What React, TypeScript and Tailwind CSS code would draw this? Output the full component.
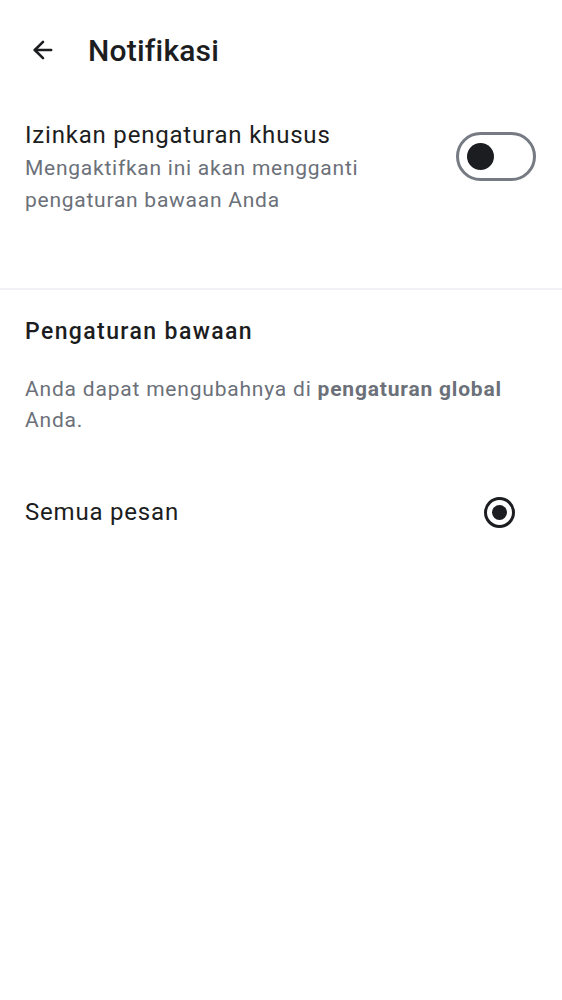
import { ArrowLeft } from 'lucide-react';

export default function App() {
  return (
    <div className="min-h-[1000px] bg-white text-[#1c1d21]" style={{ fontFamily: 'Roboto, "Noto Sans", sans-serif' }}>
      {/* header */}
      <div className="flex h-[100px] items-center px-[29px]">
        <ArrowLeft className="h-[28px] w-[28px]" strokeWidth={2.2} />
        <h1 className="ml-[31px] text-[30px] font-medium tracking-[0.2px]">Notifikasi</h1>
      </div>

      {/* custom settings toggle */}
      <div className="flex items-start justify-between px-[25px] pt-[18px] pb-[72px]">
        <div>
          <p className="text-[24px] leading-[34px] tracking-[0.8px]">Izinkan pengaturan khusus</p>
          <p className="text-[21px] leading-[32px] tracking-[0.75px] text-[#6b7079]">
            Mengaktifkan ini akan mengganti
            <br />
            pengaturan bawaan Anda
          </p>
        </div>
        <button className="mt-[14px] mr-[1px] flex h-[49px] w-[80px] items-center rounded-full border-[3px] border-[#767a82] px-[8px]">
          <span className="h-[27px] w-[27px] rounded-full bg-[#1c1d21]" />
        </button>
      </div>

      <div className="h-[2px] bg-[#f0f1f4]" />

      {/* defaults */}
      <div className="px-[25px] pt-[26px]">
        <h2 className="text-[23px] font-medium leading-[32px] tracking-[1.4px]">Pengaturan bawaan</h2>
        <p className="mt-[26px] text-[21px] leading-[31px] tracking-[0.8px] text-[#6b7079]">
          Anda dapat mengubahnya di <span className="font-bold">pengaturan global</span>
          <br />
          Anda.
        </p>
        <div className="mt-[59px] flex items-center justify-between">
          <span className="text-[24px] leading-[34px] tracking-[0.8px]">Semua pesan</span>
          <span className="mr-[22px] flex h-[31px] w-[31px] items-center justify-center rounded-full border-[3px] border-[#1c1d21]">
            <span className="h-[15px] w-[15px] rounded-full bg-[#1c1d21]" />
          </span>
        </div>
      </div>
    </div>
  );
}
